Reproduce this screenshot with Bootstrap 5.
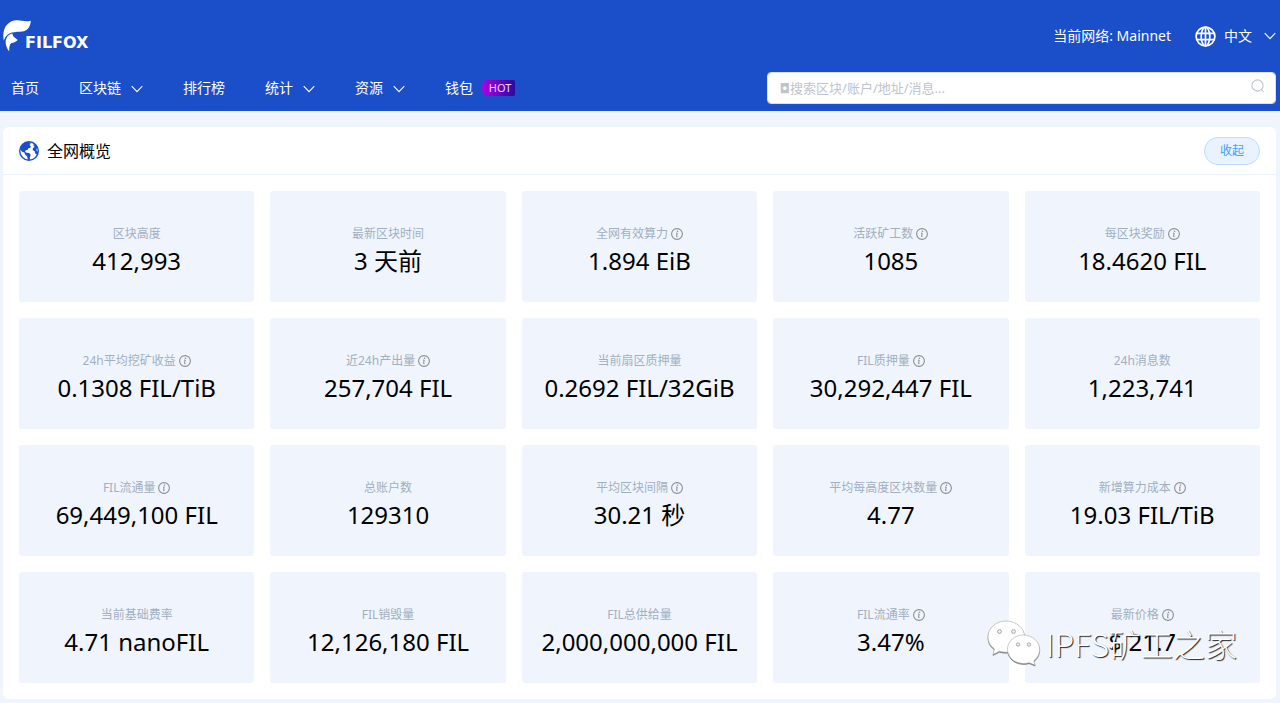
<!DOCTYPE html>
<html lang="zh-CN">
<head>
<meta charset="utf-8">
<meta name="viewport" content="width=device-width, initial-scale=1">
<title>Filfox</title>
<link href="https://cdn.jsdelivr.net/npm/bootstrap@5.3.0/dist/css/bootstrap.min.css" rel="stylesheet">
<style>
  body { background: #f0f5fd; font-family: "Noto Sans", "Liberation Sans", "Noto Sans CJK SC", sans-serif; font-size: 14px; line-height: 20px; color: #000; }
  .site-header { background: #1b4fc9; color: #fff; min-height: 111px; padding: 0 4px 0 3px; }
  .top-bar { height: 72px; }
  .brand { color: #fff; font-family: "DejaVu Sans", sans-serif; font-weight: 700; font-size: 16px; line-height: 20px; }
  .brand svg { width: 29px; height: 32px; }
  .brand-name { margin: 14px 0 0 -7px; }
  .site-header button, .main-menu a { color: #fff; background: none; border: 0; padding: 0; text-decoration: none; line-height: 20px; }
  .main-menu { gap: 40px; padding-left: 8px; height: 32px; }
  .chev { width: 12px; height: 8px; fill: none; stroke: #fff; stroke-width: 1.1; }
  .main-menu .chev { margin-left: 10px; }
  .hot { font-size: 11px; line-height: 16px; color: #f3d6ff; width: 34px; padding-left: 4px; background: linear-gradient(90deg, #b400e6, #2a0a9e); border-radius: 2px; clip-path: polygon(0 50%, 4px 0, 100% 0, 100% 100%, 4px 100%); text-align: center; }
  .search-box { width: 40%; height: 32px; }
  .search-box input { height: 32px; border: 1px solid #dcdfe6; border-radius: 4px; padding: 0 32px 0 12px; font-family: "Noto Sans", "DejaVu Sans", "Noto Sans CJK SC", sans-serif; font-size: 13px; }
  .search-box input::placeholder { color: #bfc3cb; opacity: 1; }
  .search-box svg { right: 11px; top: 7px; width: 14px; height: 14px; }
  .content { padding: 16px 4px 4px 3px; }
  .panel { background: #fff; border-radius: 6px; }
  .panel-head { height: 48px; padding: 0 16px; border-bottom: 1px solid #ebf2fa; }
  .panel-head h1 { font-size: 16px; line-height: 24px; }
  .fold { width: 56px; height: 28px; border: 1px solid #bddcff; border-radius: 14px; background: #e9f3ff; color: #409eff; font-size: 12px; padding: 0; }
  .tile { background: #f0f5fd; border-radius: 3px; padding: 34px 0 23px; text-align: center; }
  .tile dt { font-weight: 400; font-size: 12px; line-height: 18px; color: #a1afc1; gap: 3px; }
  .tile dd { font-size: 24px; line-height: 36px; }
  .info { width: 12px; height: 12px; flex: none; }
  .watermark { right: 39px; bottom: 33px; color: #fff; font: 300 32px/44px "Noto Sans CJK SC", sans-serif; text-shadow: 1px 1px 1px #222; gap: 5px; pointer-events: none; }
  .watermark svg { width: 54px; height: 46px; filter: drop-shadow(0 1px 0 #777); }
</style>
</head>
<body>
<svg class="d-none">
  <symbol id="i-info" viewBox="0 0 12 12"><circle cx="6" cy="6" r="5.4" fill="none" stroke="#8b8f95" stroke-width="1.1"/><path d="M5 5.1h1.2L5.5 8.6h1.1" fill="none" stroke="#8b8f95"/><circle cx="6.5" cy="3.3" r=".8" fill="#8b8f95"/></symbol>
  <symbol id="i-chev" viewBox="0 0 12 8"><path d="M.7 1.2 6 6.6l5.3-5.4"/></symbol>
</svg>

<header class="site-header">
  <div class="top-bar d-flex justify-content-between align-items-center">
    <a href="#" class="brand d-flex align-items-center text-decoration-none">
      <svg viewBox="0 0 29 32" fill="#fff"><path d="M.8 20.500C-1.500 8 5 .5 14 .3c5-.1 8 2 13.800.4C27.500 7 24 11.700 17 11.800 9 12 3.500 13 .8 20.500z"/><path d="M2.700 20.500c.8-3.300 2.500-5.600 5-6.500l1.500-.4 1.200 3 4.300 3.300c-2 1.700-3.600 2.600-6.200 3.100-1.500 1-2.300 2.500-2.300 8.500C4 28.500 2.300 25 2.700 20.500z"/></svg>
      <span class="brand-name">FILFOX</span>
    </a>
    <div class="d-flex align-items-center">
      <span>当前网络: Mainnet</span>
      <button type="button" class="d-flex align-items-center ms-4">
        <svg width="21" height="21" viewBox="0 0 21 21" fill="none" stroke="#fff" stroke-width="1.700"><circle cx="10.500" cy="10.500" r="9.400"/><ellipse cx="10.500" cy="10.500" rx="4.300" ry="9.400"/><path d="M10.500 1v19M1.500 7.300h18M1.500 13.700h18"/></svg>
        <span class="ms-2 me-2">中文</span>
        <svg class="chev ms-1"><use href="#i-chev"/></svg>
      </button>
    </div>
  </div>
  <div class="d-flex justify-content-between">
    <nav class="main-menu d-flex align-items-center">
      <a href="#">首页</a>
      <button type="button">区块链<svg class="chev"><use href="#i-chev"/></svg></button>
      <a href="#">排行榜</a>
      <button type="button">统计<svg class="chev"><use href="#i-chev"/></svg></button>
      <button type="button">资源<svg class="chev"><use href="#i-chev"/></svg></button>
      <a href="#" class="d-flex align-items-center gap-2">钱包<span class="hot">HOT</span></a>
    </nav>
    <form class="search-box position-relative">
      <input type="text" class="form-control" aria-label="搜索" placeholder="◘搜索区块/账户/地址/消息...">
      <svg class="position-absolute" viewBox="0 0 14 14" fill="none" stroke="#c0c4cc" stroke-width="1.100"><circle cx="6.500" cy="6.500" r="5.600"/><path d="m10.500 10.500 2 2.300"/></svg>
    </form>
  </div>
</header>

<main class="content">
  <section class="panel position-relative">
    <div class="panel-head d-flex align-items-center justify-content-between">
      <div class="d-flex align-items-center gap-2">
        <svg width="20" height="20" viewBox="0 0 20 20"><circle cx="10" cy="10" r="9.300" fill="#fff" stroke="#1b4fc9" stroke-width="1.400"/><path fill="#1b4fc9" d="M1 8C2 4 5 1 9.500.8l2.300 1.700L10.500 4l1.300 1-.5 2-2 .3-.6 1.500-2 .4-.7 1.500 1.500 1 2.700.3 1.600 2-1 2.200.2 2.600-2 .2-.8-3.500L6 13.500l-.6-2L3 10.700zM14 3.500l2.500-.2 2.300 4-1.300.4.200 2.300 1.500 1-1 3-2-1.500-.5-2.300-2-1 .2-2 1.600-1.200z"/></svg>
        <h1 class="m-0 fw-normal">全网概览</h1>
      </div>
      <button type="button" class="fold">收起</button>
    </div>
    <div class="p-3">
      <div class="row row-cols-5 g-3">
        <div class="col"><dl class="tile m-0"><dt class="d-flex justify-content-center align-items-center">区块高度</dt><dd class="m-0">412,993</dd></dl></div>
        <div class="col"><dl class="tile m-0"><dt class="d-flex justify-content-center align-items-center">最新区块时间</dt><dd class="m-0">3 天前</dd></dl></div>
        <div class="col"><dl class="tile m-0"><dt class="d-flex justify-content-center align-items-center">全网有效算力<svg class="info"><use href="#i-info"/></svg></dt><dd class="m-0">1.894 EiB</dd></dl></div>
        <div class="col"><dl class="tile m-0"><dt class="d-flex justify-content-center align-items-center">活跃矿工数<svg class="info"><use href="#i-info"/></svg></dt><dd class="m-0">1085</dd></dl></div>
        <div class="col"><dl class="tile m-0"><dt class="d-flex justify-content-center align-items-center">每区块奖励<svg class="info"><use href="#i-info"/></svg></dt><dd class="m-0">18.4620 FIL</dd></dl></div>

        <div class="col"><dl class="tile m-0"><dt class="d-flex justify-content-center align-items-center">24h平均挖矿收益<svg class="info"><use href="#i-info"/></svg></dt><dd class="m-0">0.1308 FIL/TiB</dd></dl></div>
        <div class="col"><dl class="tile m-0"><dt class="d-flex justify-content-center align-items-center">近24h产出量<svg class="info"><use href="#i-info"/></svg></dt><dd class="m-0">257,704 FIL</dd></dl></div>
        <div class="col"><dl class="tile m-0"><dt class="d-flex justify-content-center align-items-center">当前扇区质押量</dt><dd class="m-0">0.2692 FIL/32GiB</dd></dl></div>
        <div class="col"><dl class="tile m-0"><dt class="d-flex justify-content-center align-items-center">FIL质押量<svg class="info"><use href="#i-info"/></svg></dt><dd class="m-0">30,292,447 FIL</dd></dl></div>
        <div class="col"><dl class="tile m-0"><dt class="d-flex justify-content-center align-items-center">24h消息数</dt><dd class="m-0">1,223,741</dd></dl></div>

        <div class="col"><dl class="tile m-0"><dt class="d-flex justify-content-center align-items-center">FIL流通量<svg class="info"><use href="#i-info"/></svg></dt><dd class="m-0">69,449,100 FIL</dd></dl></div>
        <div class="col"><dl class="tile m-0"><dt class="d-flex justify-content-center align-items-center">总账户数</dt><dd class="m-0">129310</dd></dl></div>
        <div class="col"><dl class="tile m-0"><dt class="d-flex justify-content-center align-items-center">平均区块间隔<svg class="info"><use href="#i-info"/></svg></dt><dd class="m-0">30.21 秒</dd></dl></div>
        <div class="col"><dl class="tile m-0"><dt class="d-flex justify-content-center align-items-center">平均每高度区块数量<svg class="info"><use href="#i-info"/></svg></dt><dd class="m-0">4.77</dd></dl></div>
        <div class="col"><dl class="tile m-0"><dt class="d-flex justify-content-center align-items-center">新增算力成本<svg class="info"><use href="#i-info"/></svg></dt><dd class="m-0">19.03 FIL/TiB</dd></dl></div>

        <div class="col"><dl class="tile m-0"><dt class="d-flex justify-content-center align-items-center">当前基础费率</dt><dd class="m-0">4.71 nanoFIL</dd></dl></div>
        <div class="col"><dl class="tile m-0"><dt class="d-flex justify-content-center align-items-center">FIL销毁量</dt><dd class="m-0">12,126,180 FIL</dd></dl></div>
        <div class="col"><dl class="tile m-0"><dt class="d-flex justify-content-center align-items-center">FIL总供给量</dt><dd class="m-0">2,000,000,000 FIL</dd></dl></div>
        <div class="col"><dl class="tile m-0"><dt class="d-flex justify-content-center align-items-center">FIL流通率<svg class="info"><use href="#i-info"/></svg></dt><dd class="m-0">3.47%</dd></dl></div>
        <div class="col"><dl class="tile m-0"><dt class="d-flex justify-content-center align-items-center">最新价格<svg class="info"><use href="#i-info"/></svg></dt><dd class="m-0">$ 21.7</dd></dl></div>
      </div>
    </div>
    <div class="watermark position-absolute d-flex align-items-center">
      <svg viewBox="0 0 54 46" fill="#fff" stroke="#aaa" stroke-width=".6"><path d="M19 1C9 1 1 8 1 17c0 5 2.500 9 6.500 12L6 34.500l6.500-3.200c2 .6 4.300.9 6.500.9 10 0 18.500-6.500 18.500-15.500S29 1 19 1z"/><path d="M36.500 15C28 15 20.500 21 20.500 29s7 14.500 16 14.500c2 0 4-.3 5.700-.8l6 2.300-1.500-4.100c3.700-2.700 6-6.900 6-11.400C52.700 21.500 45 15 36.500 15z"/><g fill="#eef2f8" stroke="#777"><circle cx="12.500" cy="11.500" r="1.900"/><circle cx="26.500" cy="11.500" r="1.900"/><circle cx="31" cy="24.500" r="1.700"/><circle cx="42" cy="24.500" r="1.700"/></g></svg>
      <span>IPFS矿工之家</span>
    </div>
  </section>
</main>
<script src="https://cdn.jsdelivr.net/npm/bootstrap@5.3.0/dist/js/bootstrap.bundle.min.js"></script>
</body>
</html>
